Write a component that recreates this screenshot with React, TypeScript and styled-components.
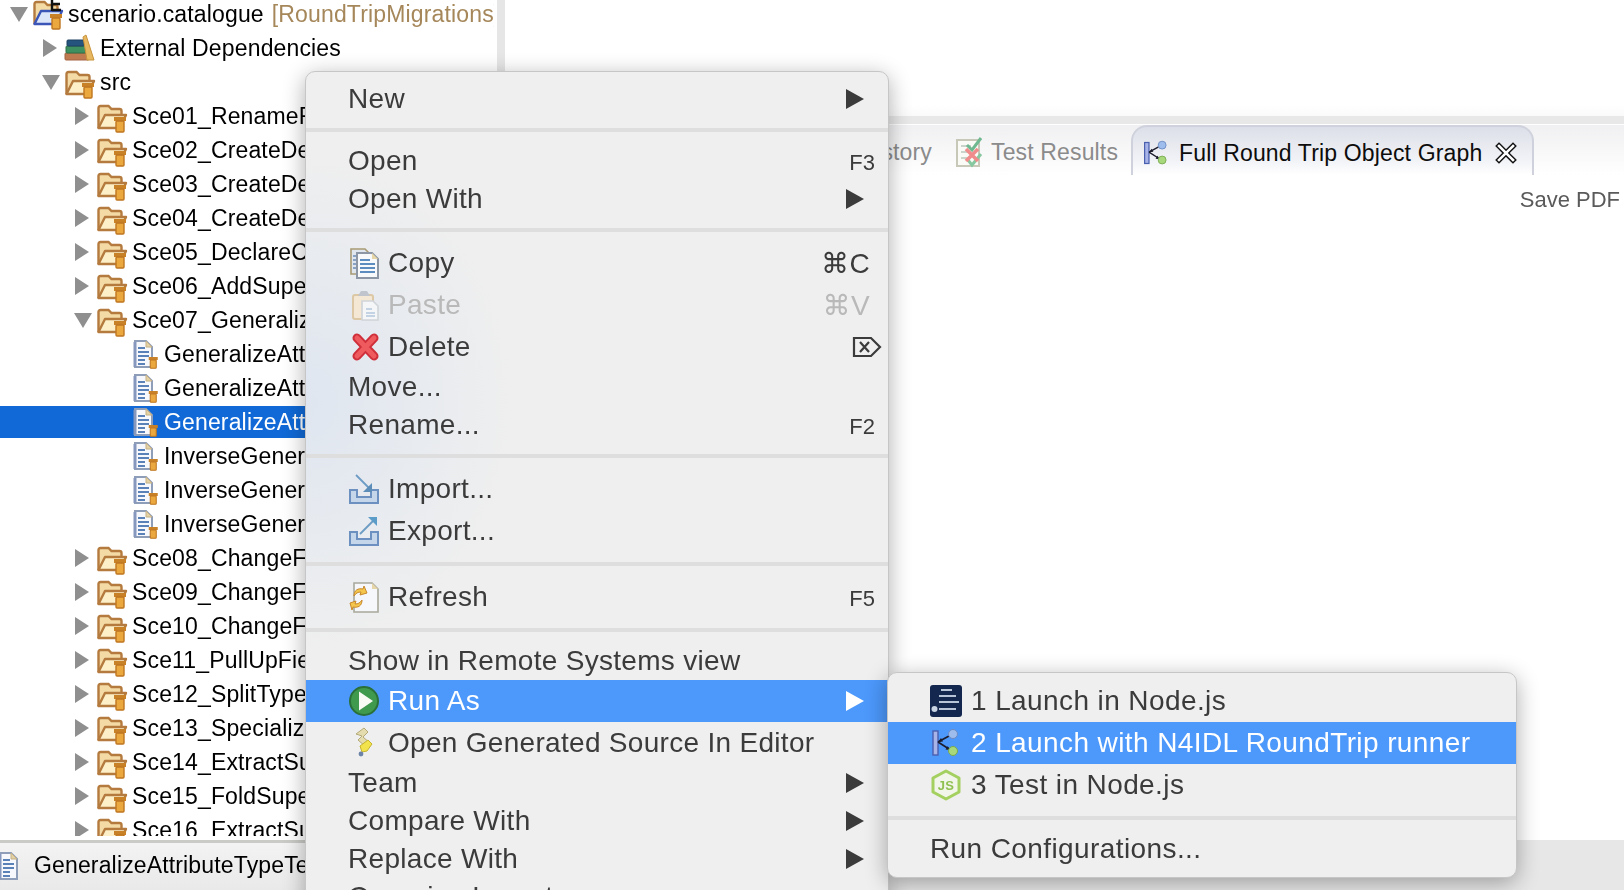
import React from "react";
import styled, { createGlobalStyle } from "styled-components";

const Global = createGlobalStyle`
  html, body { margin: 0; padding: 0; width: 1624px; height: 890px; overflow: hidden; background: #fff; }
  body { font-family: "Liberation Sans", Arial, sans-serif; }
  #root { width: 1624px; height: 890px; }
`;

const Page = styled.div`
  position: relative;
  width: 1624px;
  height: 890px;
  display: flex;
  flex-direction: column;
  overflow: hidden;
  filter: blur(0.3px);
`;
const Main = styled.div`
  height: 840px;
  display: flex;
  flex: none;
`;
const LeftPanel = styled.div`
  width: 494px;
  flex: none;
  height: 836px;
  overflow: hidden;
`;
const Sash = styled.div`
  width: 3px;
  flex: none;
  background: #fff;
  border-right: 8px solid #e6e6e6;
`;
const Tree = styled.div`
  margin-top: -2px;
  display: flex;
  flex-direction: column;
  gap: 2px;
`;
const Row = styled.div<{ $depth: number; $selected?: boolean }>`
  height: 32px;
  flex: none;
  display: flex;
  align-items: center;
  padding-left: ${(p) => 10 + p.$depth * 32}px;
  background: ${(p) => (p.$selected ? "#1069d6" : "transparent")};
  color: ${(p) => (p.$selected ? "#fff" : "#000")};
  font-size: 23px;
  letter-spacing: 0.15px;
  white-space: nowrap;
`;
const RowText = styled.span`
  padding-top: 1px;
`;
const Twist = styled.span`
  width: 18px;
  height: 18px;
  flex: none;
  margin-right: 5px;
  display: flex;
  align-items: center;
  justify-content: flex-start;
`;
const TriRight = styled.span`
  width: 0;
  height: 0;
  margin-left: 1px;
  border-left: 14px solid #8f8f8f;
  border-top: 9px solid transparent;
  border-bottom: 9px solid transparent;
`;
const TriDown = styled.span`
  width: 0;
  height: 0;
  border-top: 15px solid #8f8f8f;
  border-left: 9px solid transparent;
  border-right: 9px solid transparent;
`;
const TreeIcon = styled.svg`
  width: 30px;
  height: 30px;
  flex: none;
  margin-right: 5px;
  overflow: visible;
`;
const Decoration = styled.span`
  color: #a5875a;
  margin-left: 8px;
  padding-top: 1px;
`;
const RightPanel = styled.div`
  flex: 1;
  min-width: 0;
  display: flex;
  flex-direction: column;
`;
const TopArea = styled.div`
  height: 116px;
  flex: none;
  background: linear-gradient(#fff 0, #fff 90%, #fafafa 100%);
`;
const Band = styled.div`
  height: 8px;
  flex: none;
  background: #e8e8e8;
  border-bottom: 1px solid #fff;
`;
const TabStrip = styled.div`
  height: 50px;
  flex: none;
  display: flex;
  align-items: stretch;
  background: linear-gradient(#f0f0f2, #fff);
  font-size: 23px;
  letter-spacing: 0.15px;
`;
const HiddenTab = styled.div`
  width: 427px;
  flex: none;
  display: flex;
  align-items: center;
  justify-content: flex-end;
  padding-top: 4px;
  color: #8b8b8b;
`;
const PlainTab = styled.div`
  width: 199px;
  flex: none;
  box-sizing: border-box;
  padding: 4px 0 0 24px;
  display: flex;
  align-items: center;
  gap: 7px;
  color: #8b8b8b;
`;
const ActiveTab = styled.div`
  width: 403px;
  flex: none;
  box-sizing: border-box;
  padding: 4px 0 0 9px;
  display: flex;
  align-items: center;
  color: #0c0c0c;
  background: linear-gradient(#dcdfe8, #f2f3f7 70%, #fff);
  border: 2px solid #cfd2dc;
  border-bottom: none;
  border-radius: 16px 16px 0 0;
`;
const TabIcon = styled.svg`
  width: 28px;
  height: 32px;
  flex: none;
`;
const TabTitle = styled.span`
  margin-left: 9px;
  white-space: nowrap;
`;
const CloseIcon = styled.svg`
  width: 22px;
  height: 22px;
  flex: none;
  margin-left: 13px;
`;
const ViewBody = styled.div`
  flex: 1;
  display: flex;
  justify-content: flex-end;
  padding: 12px 4px 0 0;
`;
const SaveLink = styled.span`
  font-size: 22px;
  line-height: 25px;
  color: #5a5a5a;
`;
const StatusBar = styled.div`
  height: 50px;
  flex: none;
  display: flex;
  background: #e7e7e7;
`;
const StatusLeft = styled.div`
  width: 500px;
  flex: none;
  box-sizing: border-box;
  border-top: 3px solid #cacac6;
  padding-bottom: 2px;
  background: linear-gradient(#f3f3f3, #e9e9e9);
  display: flex;
  align-items: center;
  font-size: 23px;
  letter-spacing: 0.15px;
  color: #000;
  white-space: nowrap;
`;
const StatusIcon = styled.svg`
  width: 26px;
  height: 30px;
  flex: none;
  margin: 0 14px 0 -6px;
`;
const MenuIcon = styled.svg`
  width: 32px;
  height: 32px;
  flex: none;
  margin-right: 8px;
`;
const Menu = styled.div<{ $left: number; $top: number; $width: number; $height?: number }>`
  position: absolute;
  left: ${(p) => p.$left}px;
  top: ${(p) => p.$top}px;
  width: ${(p) => p.$width}px;
  ${(p) => (p.$height ? `height: ${p.$height}px;` : "")}
  box-sizing: border-box;
  padding: 8px 0;
  border: 1px solid #c6c6c6;
  border-radius: 10px;
  background: #efefef;
  box-shadow: 0 5px 22px rgba(0, 0, 0, 0.32);
  font-size: 28px;
  color: #3b3b3b;
`;
const MainMenu = styled(Menu)`
  letter-spacing: 0.3px;
  background: radial-gradient(ellipse 210px 250px at 0 330px, #dfe6f0 0, rgba(223, 230, 240, 0) 100%), #efefef;
`;
const SubMenu = styled(Menu)`
  padding-top: 7px;
  letter-spacing: 0.4px;
  ${MenuIcon} {
    margin-right: 9px;
  }
`;
const Item = styled.div<{ $tall?: boolean; $active?: boolean; $disabled?: boolean; $pad: number }>`
  height: ${(p) => (p.$tall ? 42 : 38)}px;
  display: flex;
  align-items: center;
  padding-left: ${(p) => p.$pad}px;
  background: ${(p) => (p.$active ? "#4c98fb" : "transparent")};
  color: ${(p) => (p.$active ? "#fff" : p.$disabled ? "#b9b9b9" : "#3b3b3b")};
  white-space: nowrap;
`;
const Separator = styled.div`
  height: 4px;
  margin: 10px 0;
  background: #dedede;
`;
const Label = styled.span`
  flex: 1;
`;
const Arrow = styled.span<{ $active?: boolean }>`
  width: 0;
  height: 0;
  margin-right: 24px;
  border-left: 18px solid ${(p) => (p.$active ? "#fff" : "#3b3b3b")};
  border-top: 10px solid transparent;
  border-bottom: 10px solid transparent;
`;
const FnKey = styled.span`
  font-size: 22px;
  letter-spacing: 0;
  margin: 3px 13px 0 0;
`;
const Combo = styled.span`
  font-family: "Liberation Sans", "DejaVu Sans", sans-serif;
  margin-right: 18px;
`;
const DeleteKey = styled.svg`
  width: 30px;
  height: 24px;
  flex: none;
  margin-right: 6px;
`;

const Jar = () => (
  <g>
    <rect x="17" y="16" width="12" height="4" fill="#c98128" />
    <rect x="19" y="20" width="8" height="11" rx="1" fill="#eaa83e" stroke="#bf7620" strokeWidth="1.4" />
  </g>
);
const FolderShape = ({ front, stroke }: { front: string; stroke: string }) => (
  <>
    <path d="M1.5 27V7q0-2 2-2h8l3 3h8q2 0 2 2v4" fill="#f4dba6" stroke="#b47a3e" strokeWidth="2.4" />
    <path d="M1.5 27 8 14h21l-6 13Z" fill={front} stroke={stroke} strokeWidth="2.4" strokeLinejoin="round" />
  </>
);
const Folder = () => (
  <TreeIcon viewBox="0 0 30 30">
    <FolderShape front="#fdf0c8" stroke="#b47a3e" />
    <Jar />
  </TreeIcon>
);
const ProjectFolder = () => (
  <TreeIcon viewBox="0 0 30 30">
    <g transform="translate(0 -2)">
      <FolderShape front="#dce8fa" stroke="#3c56b8" />
    </g>
    <path d="M19-2v14M19-1h9M19 5h8M19 11h9" stroke="#111" strokeWidth="2.4" fill="none" />
    <g transform="translate(0 -1)"><Jar /></g>
  </TreeIcon>
);
const Books = () => (
  <TreeIcon viewBox="0 0 30 30">
    <rect x="0" y="20" width="24" height="7" rx="1" fill="#c07a50" stroke="#a36240" />
    <rect x="1" y="13" width="21" height="7" rx="1" fill="#3f9060" stroke="#2f7048" />
    <rect x="2" y="7" width="17" height="6" rx="1" fill="#25547e" stroke="#1c4060" />
    <path d="M18 4 21 2l8 25h-7Z" fill="#e8b860" stroke="#c8923a" />
  </TreeIcon>
);
const FileLines = () => (
  <>
    <path d="M6 2h11l6 6v20H6Z" fill="#f7f8fb" stroke="#8e9db8" strokeWidth="2" />
    <path d="M17 2v6h6Z" fill="#e4d2a4" stroke="#c4b084" />
    <path d="M6 3v25" stroke="#8698bd" strokeWidth="3" />
    <path d="M9 9h7M9 13h11M9 17h11M9 21h7M9 25h7" stroke="#5a82b8" strokeWidth="1.8" />
  </>
);
const TestFile = () => (
  <TreeIcon viewBox="0 0 30 30">
    <FileLines />
    <g transform="translate(7 6) scale(.75)"><Jar /></g>
  </TreeIcon>
);
const GraphGlyph = () => (
  <>
    <rect x="3" y="4" width="5" height="24" fill="#a8b4e8" stroke="#4a60b0" strokeWidth="1.4" />
    <path d="M8 15 19 9M8 15 19 22" stroke="#1c1c2c" strokeWidth="1.6" />
    <path d="M8 15l5-.5-2-3.4ZM21 23l-5.5-.4 2-3.4Z" fill="#1c1c2c" />
    <circle cx="23" cy="7" r="4.5" fill="#9ebcec" stroke="#6c8cc4" />
    <circle cx="23" cy="24" r="4.5" fill="#a8d87c" stroke="#78a850" />
  </>
);
const TestResultsIcon = () => (
  <TabIcon viewBox="0 0 28 32">
    <rect x="1" y="4" width="22" height="26" fill="#fafaf6" stroke="#c8c8b8" strokeWidth="2" />
    <path d="M5 10h10M5 16h8M5 22h8" stroke="#bcc8bc" strokeWidth="1.5" />
    <path d="M11 9l5 5 9-12" stroke="#70b890" strokeWidth="3" fill="none" />
    <path d="M12 24l4 5 9-11" stroke="#88c8a0" strokeWidth="3" fill="none" />
    <path d="M10 13l12 12M22 13 10 25" stroke="#f08c8c" strokeWidth="3.6" />
  </TabIcon>
);
const CopyIcon = () => (
  <MenuIcon viewBox="0 0 32 32">
    <path d="M3 2h14l5 5v20H3Z" fill="#e0e6ee" stroke="#a89a74" strokeWidth="1.6" />
    <path d="M5 9h3M5 13h3M5 17h3M5 21h3" stroke="#6a8cb8" strokeWidth="1.6" />
    <path d="M9 6h15l6 6v19H9Z" fill="#f8f9fb" stroke="#8c96a4" strokeWidth="2" />
    <path d="M24 6v6h6Z" fill="#e6d6a8" />
    <path d="M12 13h10M12 17h15M12 21h15M12 25h15" stroke="#5c8cc0" strokeWidth="2" />
  </MenuIcon>
);
const PasteIcon = () => (
  <MenuIcon viewBox="0 0 32 32">
    <rect x="5" y="6" width="20" height="24" rx="2" fill="#f4e8d4" stroke="#dcc8a4" strokeWidth="2" />
    <path d="M10 7l3-5h6l3 5Z" fill="#c0c4cc" />
    <path d="M14 12h11l5 5v14H14Z" fill="#f4f6f8" stroke="#cfd4d8" strokeWidth="1.6" />
    <path d="M18 20h6M18 24h9M18 27h9" stroke="#b4c8dc" strokeWidth="1.6" />
  </MenuIcon>
);
const DeleteIcon = () => (
  <MenuIcon viewBox="0 0 32 32">
    <path d="M9 7 26 25M26 7 9 25" stroke="#cf2f3a" strokeWidth="9" strokeLinecap="round" />
    <path d="M9 7 26 25M26 7 9 25" stroke="#ee5a5e" strokeWidth="5" strokeLinecap="round" />
  </MenuIcon>
);
const ImportIcon = () => (
  <MenuIcon viewBox="0 0 32 32">
    <path d="M2 17h7v7h14v-7h7v13H2Z" fill="#c6d6ea" stroke="#6c90c0" strokeWidth="2" />
    <path d="M8 2l13 13" stroke="#6c9cc4" strokeWidth="1.8" />
    <path d="M24 19v-9l-9 9Z" fill="#5c8cb8" />
  </MenuIcon>
);
const ExportIcon = () => (
  <MenuIcon viewBox="0 0 32 32">
    <path d="M2 17h7v7h14v-7h7v13H2Z" fill="#c6d6ea" stroke="#6c90c0" strokeWidth="2" />
    <path d="M12 19 25 6" stroke="#6c9cc4" strokeWidth="1.8" />
    <path d="M29 2v9l-9-9Z" fill="#5c9cc8" />
  </MenuIcon>
);
const RefreshIcon = () => (
  <MenuIcon viewBox="0 0 32 32">
    <path d="M6 2h18l6 6v23H6Z" fill="#f6f7fa" stroke="#a8a89c" strokeWidth="1.6" />
    <path d="M24 2v6h6Z" fill="#e6d6a8" />
    <path d="M6 15c0-6 4-8 9-7l1-3 3 7-7 2 1-3c-3 0-5 1-7 4Z" fill="#f4c64c" stroke="#c8882c" />
    <path d="M14 19c0 6-4 8-9 7l-1 3-2-7 6-2-1 3c3 0 5-1 7-4Z" fill="#f4c64c" stroke="#c8882c" />
  </MenuIcon>
);
const RunIcon = () => (
  <MenuIcon viewBox="0 0 32 32">
    <circle cx="16" cy="16" r="14" fill="#3f9a4e" stroke="#2a7038" strokeWidth="2" />
    <path d="M11 6.5 25 16 11 25.5Z" fill="#f8faf4" />
  </MenuIcon>
);
const SourceIcon = () => (
  <MenuIcon viewBox="0 0 32 32">
    <path d="M8 7 16 1l4 4-5 5 7 6-4 4-8-7 4-4Z" fill="#e4dcae" stroke="#b4aa78" />
    <path d="M12 19l8-6 4 4-5 7-5 1Z" fill="#f2e24c" stroke="#c4b430" />
    <circle cx="13" cy="27" r="2.4" fill="#6c84a8" />
  </MenuIcon>
);
const TerminalIcon = () => (
  <MenuIcon viewBox="0 0 32 32">
    <rect x="0" y="0" width="32" height="32" rx="3" fill="#14274e" />
    <path d="M11 5h11M9 11h17M9 17h20M9 24h17" stroke="#b8c4d8" strokeWidth="2.2" />
    <circle cx="4.5" cy="24" r="3" fill="#c8d4e4" />
  </MenuIcon>
);
const NodeIcon = () => (
  <MenuIcon viewBox="0 0 32 32">
    <path d="M16 2 29 9v14l-13 7-13-7V9Z" fill="#f2f6ea" stroke="#a4d060" strokeWidth="3" strokeLinejoin="round" />
    <text x="16" y="21" textAnchor="middle" fontFamily="Liberation Sans" fontSize="13" fontWeight="700" fill="#90c050">JS</text>
  </MenuIcon>
);
const GraphIcon = () => (
  <MenuIcon viewBox="0 0 32 32">
    <GraphGlyph />
  </MenuIcon>
);

type TreeRow = { depth: number; kind: "project" | "books" | "folder" | "file"; label: string; open?: boolean; selected?: boolean; deco?: string };

const sce = (label: string, open?: boolean): TreeRow => ({ depth: 2, kind: "folder", label, open });
const file = (label: string, selected?: boolean): TreeRow => ({ depth: 3, kind: "file", label, selected });
const rows: TreeRow[] = [
  { depth: 0, kind: "project", label: "scenario.catalogue", open: true, deco: "[RoundTripMigrations]" },
  { depth: 1, kind: "books", label: "External Dependencies", open: false },
  { depth: 1, kind: "folder", label: "src", open: true },
  sce("Sce01_RenameField", false),
  sce("Sce02_CreateDefinition", false),
  sce("Sce03_CreateDefinition", false),
  sce("Sce04_CreateDefinition", false),
  sce("Sce05_DeclareClass", false),
  sce("Sce06_AddSuperType", false),
  sce("Sce07_GeneralizeAttributeType", true),
  file("GeneralizeAttributeType"),
  file("GeneralizeAttributeType"),
  file("GeneralizeAttributeTypeTest", true),
  file("InverseGeneralizeAttribute"),
  file("InverseGeneralizeAttribute"),
  file("InverseGeneralizeAttribute"),
  sce("Sce08_ChangeFieldType", false),
  sce("Sce09_ChangeFieldType", false),
  sce("Sce10_ChangeFieldType", false),
  sce("Sce11_PullUpField", false),
  sce("Sce12_SplitType", false),
  sce("Sce13_SpecializeType", false),
  sce("Sce14_ExtractSuperType", false),
  sce("Sce15_FoldSuperType", false),
  sce("Sce16_ExtractSubType", false),
];

const rowIcon = (k: TreeRow["kind"]) =>
  k === "project" ? <ProjectFolder /> : k === "books" ? <Books /> : k === "folder" ? <Folder /> : <TestFile />;

type Entry =
  | "sep"
  | { label: string; icon?: React.ReactNode; arrow?: boolean; fn?: string; combo?: string; del?: boolean; active?: boolean; disabled?: boolean };

const menu: Entry[] = [
  { label: "New", arrow: true },
  "sep",
  { label: "Open", fn: "F3" },
  { label: "Open With", arrow: true },
  "sep",
  { label: "Copy", icon: <CopyIcon />, combo: "⌘C" },
  { label: "Paste", icon: <PasteIcon />, combo: "⌘V", disabled: true },
  { label: "Delete", icon: <DeleteIcon />, del: true },
  { label: "Move..." },
  { label: "Rename...", fn: "F2" },
  "sep",
  { label: "Import...", icon: <ImportIcon /> },
  { label: "Export...", icon: <ExportIcon /> },
  "sep",
  { label: "Refresh", icon: <RefreshIcon />, fn: "F5" },
  "sep",
  { label: "Show in Remote Systems view" },
  { label: "Run As", icon: <RunIcon />, arrow: true, active: true },
  { label: "Open Generated Source In Editor", icon: <SourceIcon /> },
  { label: "Team", arrow: true },
  { label: "Compare With", arrow: true },
  { label: "Replace With", arrow: true },
  { label: "Organize Imports" },
];

const submenu: Entry[] = [
  { label: "1 Launch in Node.js", icon: <TerminalIcon /> },
  { label: "2 Launch with N4IDL RoundTrip runner", icon: <GraphIcon />, active: true },
  { label: "3 Test in Node.js", icon: <NodeIcon /> },
  "sep",
  { label: "Run Configurations..." },
];

const renderEntries = (entries: Entry[], pad: number) =>
  entries.map((e, i) =>
    e === "sep" ? (
      <Separator key={i} />
    ) : (
      <Item key={i} $tall={!!e.icon} $active={e.active} $disabled={e.disabled} $pad={pad}>
        {e.icon}
        <Label>{e.label}</Label>
        {e.fn && <FnKey>{e.fn}</FnKey>}
        {e.combo && <Combo>{e.combo}</Combo>}
        {e.del && (
          <DeleteKey viewBox="0 0 30 24">
            <path d="M2 3h17l9 9-9 9H2Z" fill="none" stroke="#3b3b3b" strokeWidth="2.2" />
            <path d="M8 7l9 10M17 7 8 17" stroke="#3b3b3b" strokeWidth="2.2" />
          </DeleteKey>
        )}
        {e.arrow && <Arrow $active={e.active} />}
      </Item>
    )
  );

export default function App() {
  return (
    <Page>
      <Global />
      <Main>
        <LeftPanel>
          <Tree>
            {rows.map((r, i) => (
              <Row key={i} $depth={r.depth} $selected={r.selected}>
                <Twist>{r.kind === "file" ? null : r.open ? <TriDown /> : <TriRight />}</Twist>
                {rowIcon(r.kind)}
                <RowText>{r.label}</RowText>
                {r.deco && <Decoration>{r.deco}</Decoration>}
              </Row>
            ))}
          </Tree>
        </LeftPanel>
        <Sash />
        <RightPanel>
          <TopArea />
          <Band />
          <TabStrip>
            <HiddenTab>History</HiddenTab>
            <PlainTab>
              <TestResultsIcon />
              <span>Test Results</span>
            </PlainTab>
            <ActiveTab>
              <TabIcon viewBox="0 0 32 32">
                <GraphGlyph />
              </TabIcon>
              <TabTitle>Full Round Trip Object Graph</TabTitle>
              <CloseIcon viewBox="0 0 22 22">
                <path d="M4 4 18 18M18 4 4 18" stroke="#111" strokeWidth="5.4" strokeLinecap="square" />
                <path d="M4 4 18 18M18 4 4 18" stroke="#fff" strokeWidth="2.6" strokeLinecap="square" />
              </CloseIcon>
            </ActiveTab>
          </TabStrip>
          <ViewBody>
            <SaveLink>Save PDF</SaveLink>
          </ViewBody>
        </RightPanel>
      </Main>
      <StatusBar>
        <StatusLeft>
          <StatusIcon viewBox="0 0 26 30">
            <FileLines />
          </StatusIcon>
          <span>GeneralizeAttributeTypeTest.n4idl</span>
        </StatusLeft>
      </StatusBar>
      <MainMenu $left={305} $top={71} $width={584}>
        {renderEntries(menu, 42)}
      </MainMenu>
      <SubMenu $left={887} $top={672} $width={630} $height={206}>
        {renderEntries(submenu, 42)}
      </SubMenu>
    </Page>
  );
}
